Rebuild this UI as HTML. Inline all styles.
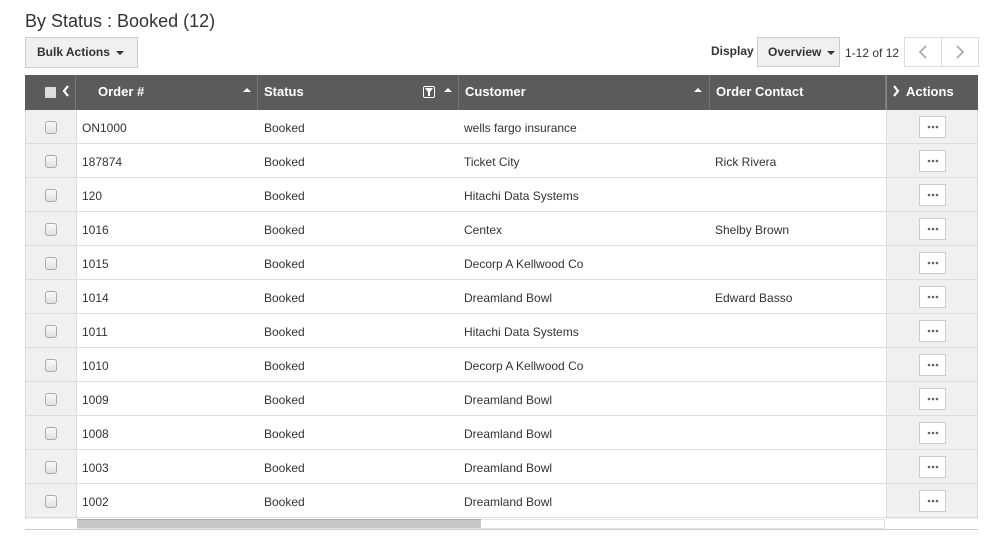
<!DOCTYPE html>
<html><head><style>
*{box-sizing:border-box;margin:0;padding:0}
body{width:994px;height:541px;background:#fff;font-family:"Liberation Sans",sans-serif;color:#333;position:relative;overflow:hidden}
.a{position:absolute}
h1{position:absolute;left:25px;top:11px;font-size:18px;font-weight:normal;color:#333}
.btn{position:absolute;background:#f0f0f0;border:1px solid #ccc;font-size:12px;font-weight:bold;color:#333}
.caret{display:inline-block;width:0;height:0;border-left:4px solid transparent;border-right:4px solid transparent;border-top:4px solid #333;vertical-align:middle;margin-left:6px}
.hdr{position:absolute;left:25px;top:75px;width:953px;height:35px;background:#5b5b5b}
.hdr div{position:absolute;top:0;height:35px;line-height:33px;color:#fff;font-weight:bold;font-size:13px;border-right:1px solid #777}
.row{position:absolute;left:25px;width:953px;height:34px;border-bottom:1px solid #ddd;font-size:12px}
.row span{position:absolute;top:1px;line-height:34px}
.cb{position:absolute;left:20px;top:11px;width:12px;height:13px;border:1px solid #aaa;border-radius:3px;background:linear-gradient(#fafafa,#e0e0e0)}
.dots{position:absolute;left:894px;top:6px;width:27px;height:22px;border:1px solid #ccc;background:#fff}
.up{display:inline-block;width:0;height:0;border-left:4px solid transparent;border-right:4px solid transparent;border-bottom:4px solid #fff;position:absolute;top:13px}
</style></head><body>
<h1>By Status : Booked (12)</h1>
<div class="btn" style="left:25px;top:37px;width:113px;height:31px;line-height:29px;padding-left:11px">Bulk Actions<span class="caret"></span></div>
<div class="a" style="left:711px;top:44px;font-size:12px;font-weight:bold">Display</div>
<div class="btn" style="left:757px;top:37px;width:83px;height:30px;line-height:28px;padding-left:10px">Overview<span class="caret"></span></div>
<div class="a" style="left:845px;top:46px;font-size:12px">1-12 of 12</div>
<div class="a" style="left:904px;top:37px;width:75px;height:30px;border:1px solid #ddd;background:#fff"></div>
<div class="a" style="left:941px;top:37px;width:1px;height:30px;background:#ddd"></div>
<svg class="a" style="left:916px;top:44px" width="14" height="16"><path d="M10 2L4 8l6 6" stroke="#aaa" stroke-width="1.8" fill="none"/></svg>
<svg class="a" style="left:953px;top:44px" width="14" height="16"><path d="M4 2l6 6-6 6" stroke="#aaa" stroke-width="1.8" fill="none"/></svg>
<div class="a" style="left:25px;top:110px;width:51px;height:409px;background:#f0f0f0"></div>
<div class="a" style="left:886px;top:110px;width:92px;height:409px;background:#f0f0f0;border-left:1px solid #ddd"></div>
<div class="hdr">
<div style="left:0;width:51px;border-right:1px solid #777"><span style="position:absolute;left:20px;top:12px;width:11px;height:11px;background:#ddd;border-radius:1px"></span><svg style="position:absolute;left:37px;top:10px" width="8" height="12"><path d="M6 1L2 6l4 5" stroke="#fff" stroke-width="2.2" fill="none"/></svg></div>
<div style="left:51px;width:182px;padding-left:22px">Order #<i class="up" style="left:167px"></i></div>
<div style="left:233px;width:201px;padding-left:6px">Status<span style="position:absolute;left:165px;top:11px;width:12px;height:12px;border:1px solid #fff;border-radius:2px"><svg style="position:absolute;left:1px;top:1px" width="8" height="8"><path d="M0 0h8L5 4v4H3V4z" fill="#fff"/></svg></span><i class="up" style="left:186px"></i></div>
<div style="left:434px;width:251px;padding-left:6px">Customer<i class="up" style="left:235px"></i></div>
<div style="left:685px;width:176px;padding-left:6px">Order Contact</div>
<div style="left:861px;width:92px;padding-left:19px;border-right:none;border-left:1px solid #888">Actions<svg style="position:absolute;left:5px;top:10px" width="8" height="12"><path d="M2 1l4 5-4 5" stroke="#fff" stroke-width="2.2" fill="none"/></svg></div>
</div>
<div class="a" style="left:76px;top:110px;width:1px;height:409px;background:#ddd"></div>
<div class="a" style="left:25px;top:110px;width:1px;height:409px;background:#ddd"></div>
<div class="a" style="left:977px;top:110px;width:1px;height:409px;background:#ddd"></div>

<div id="rows"></div>
<script>
var d=[["ON1000","wells fargo insurance",""],["187874","Ticket City","Rick Rivera"],["120","Hitachi Data Systems",""],["1016","Centex","Shelby Brown"],["1015","Decorp A Kellwood Co",""],["1014","Dreamland Bowl","Edward Basso"],["1011","Hitachi Data Systems",""],["1010","Decorp A Kellwood Co",""],["1009","Dreamland Bowl",""],["1008","Dreamland Bowl",""],["1003","Dreamland Bowl",""],["1002","Dreamland Bowl",""]];
var dots='<svg style="position:absolute;left:7px;top:8px" width="12" height="4"><circle cx="2" cy="2" r="1.3" fill="#666"/><circle cx="6" cy="2" r="1.3" fill="#666"/><circle cx="10" cy="2" r="1.3" fill="#666"/></svg>';
var h="";d.forEach(function(r,i){h+='<div class="row" style="top:'+(110+i*34)+'px"><i class="cb"></i><span style="left:57px">'+r[0]+'</span><span style="left:239px">Booked</span><span style="left:439px">'+r[1]+'</span><span style="left:690px">'+r[2]+'</span><i class="dots">'+dots+'</i></div>';});
document.getElementById("rows").innerHTML=h;
</script>
<div class="a" style="left:77px;top:519px;width:808px;height:10px;border:1px solid #e4e4e4;background:#fff"></div>
<div class="a" style="left:77px;top:519px;width:404px;height:9px;background:#c8c8c8;border-top:1px solid #aaa"></div>
<div class="a" style="left:25px;top:529px;width:953px;height:1px;background:#ccc"></div>
</body></html>
